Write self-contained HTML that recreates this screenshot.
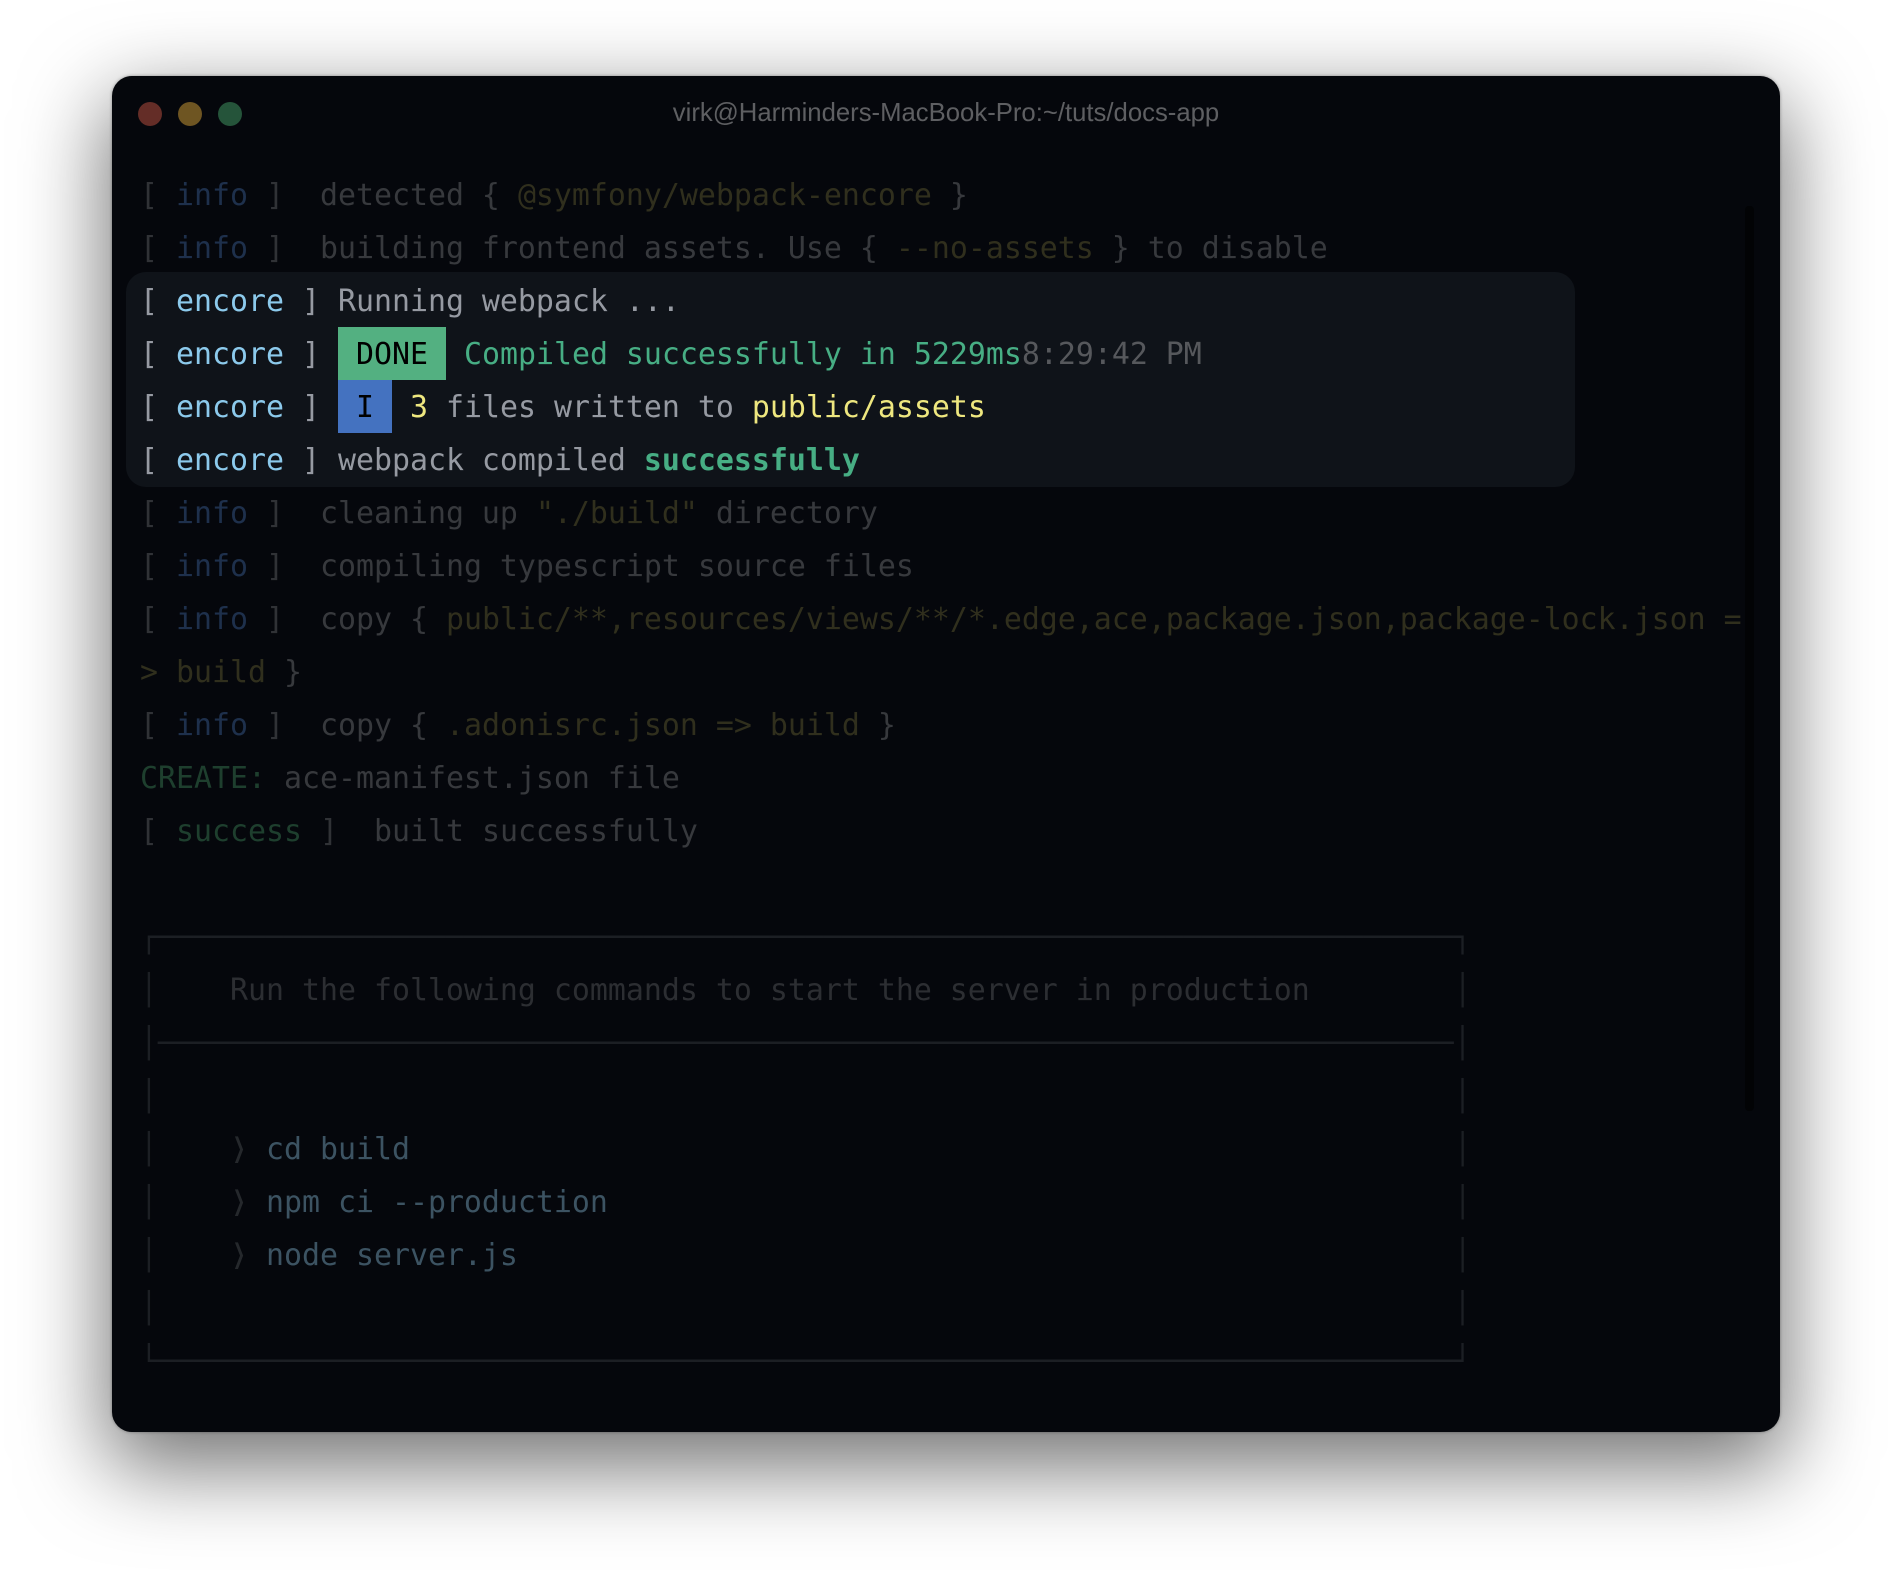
<!DOCTYPE html>
<html>
<head>
<meta charset="utf-8">
<style>
html,body{margin:0;padding:0;background:#fff;width:1892px;height:1580px;overflow:hidden}
.win{position:absolute;left:112px;top:76px;width:1668px;height:1356px;background:#05070c;border-radius:20px;box-shadow:0 30px 85px 6px rgba(0,0,0,.55),0 0 3px rgba(0,0,0,.35)}
.dot{position:absolute;top:126px;width:24px;height:24px;margin-top:-24px;border-radius:50%}
.title{position:absolute;left:0;width:1892px;top:98px;text-align:center;font:25.7px/30px "Liberation Sans",sans-serif;color:#5e5f62}
.hl{position:absolute;left:126px;top:272px;width:1449px;height:215px;background:#0f1319;border-radius:20px}
.sb{position:absolute;left:1745px;top:206px;width:9px;height:905px;background:#020305;border-radius:4px}
pre{position:absolute;z-index:1;left:140px;top:168.9px;margin:0;font:29.9px/53.02px "DejaVu Sans Mono",monospace;color:#37393d;white-space:pre;filter:blur(.3px)}
.br{color:#303236}.i{color:#1e304c}.y{color:#302f1d}.g{color:#1e3f2e}
.e{color:#8ccaec}.w{color:#969aa2}.gr{color:#47ae84}.yl{color:#eee77f}.t{color:#56585c}
.d,.b{position:relative;display:inline-block;height:53px;vertical-align:top;color:#000}
.d::before,.b::before{content:"";position:absolute;left:0;right:0;top:-1px;height:53px;z-index:-1}
.d::before{background:#53b081}
.b::before{background:#4472c0}
.l{color:#1c1f24}.m{color:#2c2e32}.c{color:#3c5362}
.v{color:#25282c;display:inline-block;width:18px;transform:scaleX(1.25)}
</style>
</head>
<body>
<div class="win"></div>
<div class="sb"></div>
<div class="dot" style="left:138px;background:#642d27"></div>
<div class="dot" style="left:178px;background:#6e5522"></div>
<div class="dot" style="left:218px;background:#25543a"></div>
<div class="title">virk@Harminders-MacBook-Pro:~/tuts/docs-app</div>
<div class="hl"></div>
<pre><span class="br">[ </span><span class="i">info</span><span class="br"> ]</span>  detected { <span class="y">@symfony/webpack-encore</span> }
<span class="br">[ </span><span class="i">info</span><span class="br"> ]</span>  building frontend assets. Use { <span class="y">--no-assets</span> } to disable
<span class="w">[ </span><span class="e">encore</span><span class="w"> ] Running webpack ...</span>
<span class="w">[ </span><span class="e">encore</span><span class="w"> ] </span><span class="d"> DONE </span> <span class="gr">Compiled successfully in 5229ms</span><span class="t">8:29:42 PM</span>
<span class="w">[ </span><span class="e">encore</span><span class="w"> ] </span><span class="b"> I </span> <span class="yl">3</span><span class="w"> files written to </span><span class="yl">public/assets</span>
<span class="w">[ </span><span class="e">encore</span><span class="w"> ] webpack compiled </span><span class="gr" style="font-weight:bold">successfully</span>
<span class="br">[ </span><span class="i">info</span><span class="br"> ]</span>  cleaning up <span class="y">"./build"</span> directory
<span class="br">[ </span><span class="i">info</span><span class="br"> ]</span>  compiling typescript source files
<span class="br">[ </span><span class="i">info</span><span class="br"> ]</span>  copy { <span class="y">public/**,resources/views/**/*.edge,ace,package.json,package-lock.json =</span>
<span class="y">&gt; build</span> }
<span class="br">[ </span><span class="i">info</span><span class="br"> ]</span>  copy { <span class="y">.adonisrc.json =&gt; build</span> }
<span class="g">CREATE:</span> ace-manifest.json file
<span class="br">[ </span><span class="g">success</span><span class="br"> ]</span>  built successfully

<span class="l">┌────────────────────────────────────────────────────────────────────────┐</span>
<span class="l">│</span>    <span class="m">Run the following commands to start the server in production</span>        <span class="l">│</span>
<span class="l">│────────────────────────────────────────────────────────────────────────│</span>
<span class="l">│                                                                        │</span>
<span class="l">│</span>    <span class="v">⟩</span> <span class="c">cd build</span>                                                          <span class="l">│</span>
<span class="l">│</span>    <span class="v">⟩</span> <span class="c">npm ci --production</span>                                               <span class="l">│</span>
<span class="l">│</span>    <span class="v">⟩</span> <span class="c">node server.js</span>                                                    <span class="l">│</span>
<span class="l">│                                                                        │</span>
<span class="l">└────────────────────────────────────────────────────────────────────────┘</span></pre>
</body>
</html>
